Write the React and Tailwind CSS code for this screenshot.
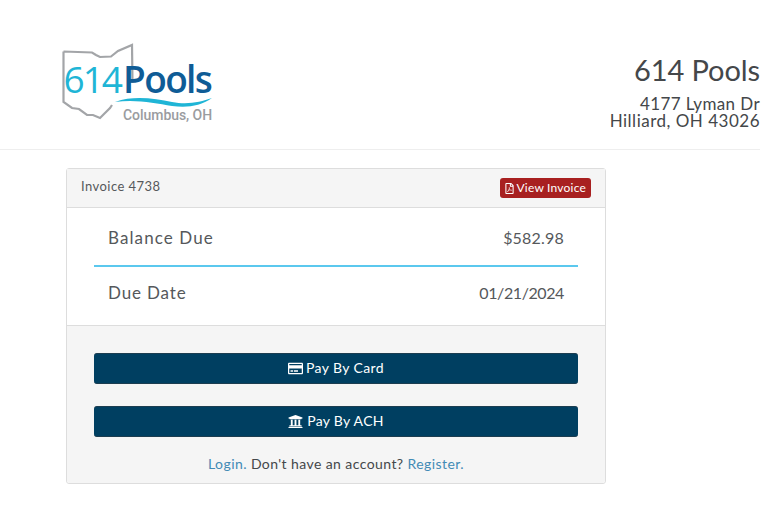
import React from 'react'
import { FaRegCreditCard, FaRegFilePdf, FaUniversity } from 'react-icons/fa'

function Logo() {
  return (
    <svg width="180" height="110" viewBox="0 0 180 110" className="block">
      <path
        d="M13.5 21.5 L13.5 72 L22 78 L29 79 L37 85 L43 85 L50 88 L55 83 L60 78 L62 75 M82.5 53 L82 15 L68 21 L61 26.5 L50 27 L46 25 L42 22.5 L13.5 21.5"
        fill="none" stroke="#a3a5a8" strokeWidth="2.2"
      />
      <text x="13.5" y="63" fontFamily="'Open Sans', sans-serif" fontWeight="500" fontSize="37" letterSpacing="-2" fill="#1fb5d6">614</text>
      <text x="73" y="63" fontFamily="'Open Sans', sans-serif" fontWeight="600" fontSize="37" letterSpacing="-1.6" fill="#0f5c96">Pools</text>
      <path d="M65 72 C85 65 105 69 122 72 C138 75 150 72 162 68 C150 76 138 78 122 76 C105 73 85 69 65 72 Z" fill="#1fb5d6" />
      <text x="73" y="90" fontFamily="'Roboto', sans-serif" fontWeight="500" fontSize="14" letterSpacing="-0.05" fill="#9a9c9f">Columbus, OH</text>
    </svg>
  )
}

export default function App() {
  return (
    <div className="w-[771px] h-[525px] bg-white overflow-hidden font-['Lato',sans-serif] text-[#44474a]">
      <div className="w-[760px]">
        <header className="flex justify-between h-[150px] border-b border-[#eeeeee]">
          <div className="pl-[50px] pt-[30px]">
            <Logo />
          </div>
          <div className="text-right pt-[51px]">
            <div className="text-[29px] leading-[38px] tracking-[-0.1px]">614 Pools</div>
            <div className="text-[17px] leading-[17px] mt-[6px] tracking-[0.4px]">4177 Lyman Dr</div>
            <div className="text-[17px] leading-[17px] tracking-[0.5px]">Hilliard, OH 43026</div>
          </div>
        </header>

        <main className="ml-[66px] mt-[18px] w-[540px] h-[316px] border border-[#dddddd] rounded-[3px] flex flex-col">
          <div className="flex justify-between items-center h-[39px] shrink-0 bg-[#f5f5f5] border-b border-[#dddddd] px-[14px]">
            <span className="text-[13px] tracking-[0.45px] text-[#55585b] -mt-[2px]">Invoice 4738</span>
            <button className="flex items-center gap-[2px] h-[20px] pl-[4px] pr-[5px] bg-[#a82020] rounded-[3px] text-[12px] tracking-[0.2px] text-white">
              <FaRegFilePdf className="text-[11px]" />
              View Invoice
            </button>
          </div>

          <div className="h-[117px] shrink-0 px-[27px] flex flex-col">
            <div className="flex justify-between items-center h-[57px] pt-[2px] px-[14px] text-[#55585b]">
              <span className="text-[17px] tracking-[1.1px]">Balance Due</span>
              <span className="text-[16px] tracking-[0.2px]">$582.98</span>
            </div>
            <div className="h-[2px] bg-[#5bc8ee]" />
            <div className="flex justify-between items-center h-[51px] px-[14px] text-[#55585b]">
              <span className="text-[17px] tracking-[0.85px]">Due Date</span>
              <span className="text-[16px] tracking-[-0.4px]">01/21/2024</span>
            </div>
          </div>

          <div className="flex-1 bg-[#f5f5f5] border-t border-[#dddddd] px-[27px] pt-[27px] rounded-b-[3px]">
            <button className="w-full h-[31px] flex items-center justify-center gap-[3px] bg-[#003f61] border-y border-[#1c3d50] rounded-[3px] text-white text-[14px] tracking-[0.4px]">
              <FaRegCreditCard className="text-[15px]" />
              <span className="-mt-[2px]">Pay By Card</span>
            </button>
            <button className="w-full h-[31px] mt-[22px] flex items-center justify-center gap-[4px] bg-[#003f61] border-y border-[#1c3d50] rounded-[3px] text-white text-[14px] tracking-[0.3px]">
              <FaUniversity className="text-[15px]" />
              <span className="-mt-[2px]">Pay By ACH</span>
            </button>
            <p className="text-center text-[14px] leading-[20px] mt-[17px] tracking-[0.42px]">
              <a className="text-[#428bb5]">Login.</a> Don't have an account? <a className="text-[#428bb5]">Register.</a>
            </p>
          </div>
        </main>
      </div>
    </div>
  )
}
